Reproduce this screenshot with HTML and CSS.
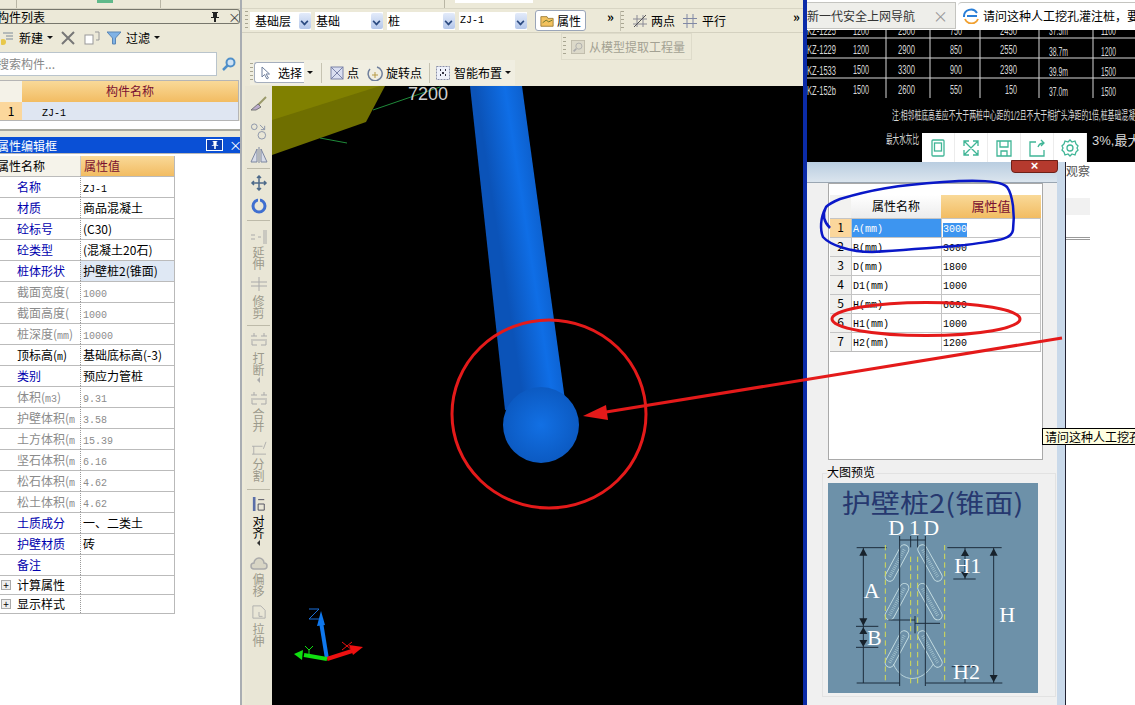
FILE: index.html
```html
<!DOCTYPE html>
<html lang="zh">
<head>
<meta charset="utf-8">
<title>构件列表</title>
<link rel="stylesheet" href="styles.css">
</head>
<body>
<div class="app">
  <aside class="left">
    <div class="strip"><i class="st-sep st-a"></i><i class="st-green"></i><i class="st-sep st-b"></i></div>
    <div class="dock-title"><span class="cut">构件列表</span><span class="dock-btns"><svg class="pin-ic" viewBox="0 0 8 10"><path d="M1 0h6v1H6v4h2v1H5v4H3V6H0V5h2V1H1z" fill="#222"/></svg><span class="close-x">×</span></span></div>
    <div class="left-tools">
      <svg class="ic14" viewBox="0 0 14 14"><path d="M2 2h10M5 5h7M5 8h7" stroke="#7d8a99" fill="none"/><circle cx="2" cy="11" r="3" fill="#e8c84a"/></svg>
      <span class="lt-text">新建</span><span class="caret"></span>
      <svg class="ic14 gap-a" viewBox="0 0 14 14"><path d="M1 1l12 12M13 1L1 13" stroke="#777" stroke-width="2"/></svg>
      <svg class="ic16 gap-c" viewBox="0 0 16 14"><rect x="1" y="4" width="8" height="9" fill="#fff" stroke="#999"/><path d="M11 1h4v8h-3" fill="none" stroke="#999"/></svg>
      <svg class="ic14 gap-d" viewBox="0 0 14 14"><path d="M0 1h14L8.500 7v6h-3V7z" fill="#7fb2e5" stroke="#5a86b5"/></svg>
      <span class="lt-text gap-b">过滤</span><span class="caret"></span>
    </div>
    <div class="search-row">
      <div class="search"><span class="cut">搜索构件...</span></div>
      <svg class="ic14 search-ic" viewBox="0 0 14 14"><circle cx="8.500" cy="5.500" r="4" fill="#cfe3f5" stroke="#4f8fc9" stroke-width="2"/><path d="M5.500 8.500L1 13" stroke="#4f8fc9" stroke-width="2.500"/></svg>
    </div>
    <div class="list">
      <div class="list-head"><div class="list-corner"></div><div class="list-name">构件名称</div></div>
      <div class="list-row"><div class="list-num">1</div><div class="list-val"><span class="latin">ZJ-1</span></div></div>
    </div>
    <div class="list-foot"></div>
    <div class="prop-title"><span class="cut">属性编辑框</span><span class="prop-btns"><span class="pin"><svg class="pin-ic" viewBox="0 0 8 10"><path d="M1 0h6v1H6v4h2v1H5v4H3V6H0V5h2V1H1z" fill="#fff"/></svg></span><span class="close-x">×</span></span></div>
    <div class="prop-body">
      <div class="prop-table">
        <div class="ph ph-name"><span class="cut">属性名称</span></div><div class="ph ph-val">属性值</div>
        <div class="pn blue">名称</div><div class="pv"><span class="latin">ZJ-1</span></div>
        <div class="pn blue">材质</div><div class="pv">商品混凝土</div>
        <div class="pn blue">砼标号</div><div class="pv">(C30)</div>
        <div class="pn blue">砼类型</div><div class="pv">(混凝土20石)</div>
        <div class="pn blue">桩体形状</div><div class="pv sel">护壁桩2(锥面)</div>
        <div class="pn gray">截面宽度(</div><div class="pv gray"><span class="latin">1000</span></div>
        <div class="pn gray">截面高度(</div><div class="pv gray"><span class="latin">1000</span></div>
        <div class="pn gray">桩深度(<span class="latin">mm</span>)</div><div class="pv gray"><span class="latin">10000</span></div>
        <div class="pn">顶标高(<span class="latin">m</span>)</div><div class="pv">基础底标高(-3)</div>
        <div class="pn blue">类别</div><div class="pv">预应力管桩</div>
        <div class="pn gray">体积(<span class="latin">m3</span>)</div><div class="pv gray"><span class="latin">9.31</span></div>
        <div class="pn gray">护壁体积(<span class="latin">m</span></div><div class="pv gray"><span class="latin">3.58</span></div>
        <div class="pn gray">土方体积(<span class="latin">m</span></div><div class="pv gray"><span class="latin">15.39</span></div>
        <div class="pn gray">坚石体积(<span class="latin">m</span></div><div class="pv gray"><span class="latin">6.16</span></div>
        <div class="pn gray">松石体积(<span class="latin">m</span></div><div class="pv gray"><span class="latin">4.62</span></div>
        <div class="pn gray">松土体积(<span class="latin">m</span></div><div class="pv gray"><span class="latin">4.62</span></div>
        <div class="pn blue">土质成分</div><div class="pv">一、二类土</div>
        <div class="pn blue">护壁材质</div><div class="pv">砖</div>
        <div class="pn blue">备注</div><div class="pv"></div>
        <div class="pn short"><span class="plus">+</span>计算属性</div><div class="pv short"></div>
        <div class="pn short"><span class="plus">+</span>显示样式</div><div class="pv short"></div>
      </div>
    </div>
  </aside>

  <main class="mid">
    <div class="strip"><i class="st-sep st-c"></i><i class="st-white"></i></div>
    <div class="bar1">
      <div class="grip"></div>
      <div class="combo c1"><span>基础层</span><i class="drop"></i></div>
      <div class="combo c2"><span>基础</span><i class="drop"></i></div>
      <div class="combo c2"><span>桩</span><i class="drop"></i></div>
      <div class="combo c2"><span class="latin">ZJ-1</span><i class="drop"></i></div>
      <div class="attr-btn">
        <svg class="ic14" viewBox="0 0 16 14"><path d="M1 2h7l1 2h6v9H1z" fill="#f3c25e" stroke="#9a7a35"/><path d="M3 9l4-3 3 2 4-2" stroke="#60702a" fill="none"/></svg>
        <span>属性</span>
      </div>
      <span class="more m1">»</span>
      <div class="vsep"></div><div class="grip"></div>
      <svg class="ic14 two" viewBox="0 0 14 14"><path d="M4 1v12M10 1v12M0 5h14M0 10h14" stroke="#8a8a96"/><path d="M1 13L13 1" stroke="#555"/></svg>
      <span class="t12 two-t">两点</span>
      <svg class="ic14 par" viewBox="0 0 14 14"><path d="M4 0v14M10 0v14M0 4.500h14M0 9.500h14" stroke="#8088a5"/></svg>
      <span class="t12 par-t">平行</span>
      <span class="more m2">»</span>
    </div>
    <div class="bar2">
      <div class="extract"><div class="grip"></div>
        <svg class="ic14 ex-ic" viewBox="0 0 16 16"><rect x=".5" y=".5" width="15" height="15" fill="#dcd9c9" stroke="#bdbaa9"/><circle cx="9" cy="7" r="3.500" fill="none" stroke="#aaa"/><path d="M6 10l-3 3" stroke="#aaa" stroke-width="2"/></svg>
        <span>从模型提取工程量</span></div>
    </div>
    <div class="bar3">
      <div class="tools3">
        <div class="grip"></div>
        <div class="sel-btn"><svg class="ic14" viewBox="0 0 14 14"><path d="M4 1v10l2.500-2.500L9 13l1.500-1L8 8h3.500z" fill="#fff" stroke="#6f7f9c"/></svg><span>选择</span></div>
        <span class="caret c-sel"></span>
        <div class="vsep s3a"></div>
        <svg class="ic14 dot-ic" viewBox="0 0 14 14"><rect x="1" y="1" width="12" height="12" fill="#d9def0" stroke="#7a82a8"/><path d="M1 1l12 12M13 1L1 13" stroke="#7a82a8"/></svg>
        <span class="t12 dot-t">点</span>
        <svg class="ic16 rot-ic" viewBox="0 0 16 16"><path d="M3 4a7 7 0 1 0 7-2" fill="none" stroke="#6f7f9c" stroke-width="1.500"/><path d="M8 7v6M5 10h6" stroke="#b79a45"/></svg>
        <span class="t12 rot-t">旋转点</span>
        <div class="vsep s3b"></div>
        <svg class="ic14 smart-ic" viewBox="0 0 14 14"><rect x=".5" y=".5" width="13" height="13" fill="#eef1fa" stroke="#8a90aa" stroke-dasharray="2 1"/><path d="M4 4h1M9 4h1M4 9h1M9 9h1M7 6v2" stroke="#334" stroke-width="2"/></svg>
        <span class="t12 smart-t">智能布置</span><span class="caret c-smart"></span>
      </div>
    </div>
    <div class="work">
      <div class="vtools">
        <svg class="vi g0" viewBox="0 0 18 16"><path d="M16 1L8 9" stroke="#9a9a6a" stroke-width="2"/><path d="M8 8l3 3-5 3H1z" fill="#b9a9c9" stroke="#777"/></svg>
        <svg class="vi g1" viewBox="0 0 18 18"><circle cx="4" cy="4" r="3" fill="none" stroke="#8a94a8"/><circle cx="12" cy="13" r="4" fill="none" stroke="#8a94a8"/><path d="M10 2l5 5M15 3v4h-4" stroke="#8a94a8" fill="none"/></svg>
        <svg class="vi g2" viewBox="0 0 18 18"><path d="M9 1v16M7 3L1 16h6zM11 3l6 13h-6z" fill="#d8dce8" stroke="#7d87a0"/></svg>
        <div class="vs v-a"></div>
        <svg class="vi g3" viewBox="0 0 16 16"><path d="M8 1v14M1 8h14M6 3l2-2 2 2M6 13l2 2 2-2M3 6L1 8l2 2M13 6l2 2-2 2" stroke="#4d6a8a" fill="none" stroke-width="1.500"/></svg>
        <svg class="vi g4" viewBox="0 0 16 16"><circle cx="8" cy="8" r="6" fill="none" stroke="#3f6fd0" stroke-width="3"/><path d="M8 0v6" stroke="#e9e6d6" stroke-width="2"/></svg>
        <div class="vs v-b"></div>
        <svg class="vi g5" viewBox="0 0 18 14"><path d="M1 5h4M1 9h4M8 7h3M14 0v14M16 0v14" stroke="#aaa"/></svg>
        <div class="vt dim t5">延伸</div>
        <svg class="vi g6" viewBox="0 0 18 14"><path d="M9 0v14M1 5h16M1 9h16" stroke="#aaa"/></svg>
        <div class="vt dim t6">修剪</div>
        <div class="vs v-c"></div>
        <svg class="vi g7" viewBox="0 0 18 14"><path d="M1 3h6M11 3h6M4 0v3M14 0v3M1 7h16M2 12h5M11 12h5M2 8v4M16 8v4" stroke="#aaa" fill="none"/></svg>
        <div class="vt dim t7">打断</div><div class="va dim"></div>
        <svg class="vi g8" viewBox="0 0 18 14"><path d="M1 3h6M11 3h6M4 0v3M14 0v3M1 7h16M2 12h5M11 12h5M2 8v4M16 8v4" stroke="#aaa" fill="none"/></svg>
        <div class="vt dim t8">合并</div>
        <svg class="vi g9" viewBox="0 0 18 16"><path d="M1 6h12M1 15h16M3 6v9M14 9l3-8" stroke="#aaa" fill="none"/></svg>
        <div class="vt dim t9">分割</div>
        <div class="vs v-d"></div>
        <svg class="vi g10" viewBox="0 0 14 16"><rect x="0" y="0" width="3" height="16" fill="#5a6ea8"/><path d="M6 3h7M6 8h7v7H6z" stroke="#445" fill="none"/></svg>
        <div class="vt t10">对齐</div><div class="va"></div>
        <svg class="vi g11" viewBox="0 0 18 14"><path d="M4 12a3 3 0 0 1 0-6 5 5 0 0 1 10 0 3 3 0 0 1 0 6z" fill="#d8d5c5" stroke="#aaa" stroke-width="1.500"/></svg>
        <div class="vt dim t11">偏移</div>
        <svg class="vi g12" viewBox="0 0 16 16"><path d="M1 1h9l5 5v9H1z M8 8v5h4" fill="none" stroke="#aaa"/></svg>
        <div class="vt dim t12v">拉伸</div>
        <div class="chev">⌄</div>
      </div>
      <div class="scene">
        <svg class="scene-svg" viewBox="272 86 531 619">
          <defs>
            <linearGradient id="shaft" gradientUnits="userSpaceOnUse" x1="500" y1="250" x2="565" y2="240">
              <stop offset="0" stop-color="#0b53b8"/><stop offset=".45" stop-color="#0f6ee6"/><stop offset="1" stop-color="#0a50b2"/>
            </linearGradient>
            <radialGradient id="ball" cx=".5" cy=".5" r=".55">
              <stop offset="0" stop-color="#1270e4"/><stop offset="1" stop-color="#0b58bf"/>
            </radialGradient>
          </defs>
          <polygon points="272,155 366,122 385,86 272,86" fill="#6f6f00"/>
          <polygon points="272,120 380,86 272,86" fill="#808000"/>
          <path d="M373 110L440 87M320 138L347 143" stroke="#1f8a3a"/>
          <text class="dim-label" x="408" y="100">7200</text>
          <polygon points="470,86 522,86 565,400 505,410" fill="url(#shaft)"/>
          <circle cx="541" cy="425" r="38" fill="url(#ball)"/>
          <path d="M327 659L321 622" stroke="#0f78ee" stroke-width="4"/>
          <path d="M321 611L317 626L325 625Z" fill="#0f78ee"/>
          <path d="M309 609h10l-10 10h10" class="ax-z"/>
          <path d="M327 659L352 651" stroke="#ee1010" stroke-width="4"/>
          <path d="M363 647L349 645L353 655Z" fill="#ee1010"/>
          <path d="M342 642l10 8M352 642l-10 8" stroke="#ee1010"/>
          <path d="M327 659L304 655" stroke="#10e010" stroke-width="4"/>
          <path d="M294 654L303 650L302 660Z" fill="#10e010"/>
          <path d="M305 646l4 4 4-4M309 650v5" stroke="#10e010" fill="none"/>
        </svg>
      </div>
    </div>
  </main>

  <section class="right">
    <div class="tabs">
      <div class="tab"><span>新一代安全上网导航</span><span class="tab-x">×</span></div>
      <div class="tab on">
        <svg class="ic16" viewBox="0 0 16 16"><path d="M1 9a7 7 0 0 1 13-4" stroke="#2a7fd8" stroke-width="2" fill="none"/><path d="M4 8h10" stroke="#2a7fd8" stroke-width="2"/><path d="M2 11a7 7 0 0 0 13 0" stroke="#f0a030" stroke-width="2" fill="none"/></svg>
        <span>请问这种人工挖孔灌注桩，要</span>
      </div>
    </div>
    <div class="cad">
      <svg class="cad-svg" viewBox="803 30 332 132">
        <path d="M807 38H1135M807 58H1135M807 78H1135M886 30V98M930 30V98M980 30V98M1039 30V98M1093 30V98" stroke="#d8d8d8"/>
        <g class="cad-t">
          <text x="807" y="35" textLength="29" lengthAdjust="spacingAndGlyphs">KZ-1225</text><text x="853" y="35" textLength="16" lengthAdjust="spacingAndGlyphs">1200</text><text x="898" y="35" textLength="17" lengthAdjust="spacingAndGlyphs">2500</text><text x="950" y="35" textLength="12" lengthAdjust="spacingAndGlyphs">750</text><text x="1000" y="35" textLength="17" lengthAdjust="spacingAndGlyphs">2450</text><text x="1049" y="35" textLength="19" lengthAdjust="spacingAndGlyphs">37.5m</text><text x="1101" y="35" textLength="15" lengthAdjust="spacingAndGlyphs">1100</text>
          <text x="807" y="54" textLength="29" lengthAdjust="spacingAndGlyphs">KZ-1229</text><text x="853" y="54" textLength="16" lengthAdjust="spacingAndGlyphs">1200</text><text x="898" y="54" textLength="17" lengthAdjust="spacingAndGlyphs">2900</text><text x="950" y="54" textLength="12" lengthAdjust="spacingAndGlyphs">850</text><text x="1000" y="54" textLength="17" lengthAdjust="spacingAndGlyphs">2550</text><text x="1049" y="56" textLength="19" lengthAdjust="spacingAndGlyphs">38.7m</text><text x="1101" y="56" textLength="15" lengthAdjust="spacingAndGlyphs">1200</text>
          <text x="807" y="75" textLength="29" lengthAdjust="spacingAndGlyphs">KZ-1533</text><text x="853" y="74" textLength="16" lengthAdjust="spacingAndGlyphs">1500</text><text x="898" y="74" textLength="17" lengthAdjust="spacingAndGlyphs">3300</text><text x="950" y="74" textLength="12" lengthAdjust="spacingAndGlyphs">900</text><text x="1000" y="74" textLength="17" lengthAdjust="spacingAndGlyphs">2390</text><text x="1049" y="76" textLength="19" lengthAdjust="spacingAndGlyphs">39.9m</text><text x="1101" y="76" textLength="15" lengthAdjust="spacingAndGlyphs">1500</text>
          <text x="807" y="95" textLength="29" lengthAdjust="spacingAndGlyphs">KZ-152b</text><text x="853" y="94" textLength="16" lengthAdjust="spacingAndGlyphs">1500</text><text x="898" y="94" textLength="17" lengthAdjust="spacingAndGlyphs">2600</text><text x="950" y="94" textLength="12" lengthAdjust="spacingAndGlyphs">550</text><text x="1005" y="94" textLength="12" lengthAdjust="spacingAndGlyphs">150</text><text x="1049" y="96" textLength="19" lengthAdjust="spacingAndGlyphs">37.0m</text><text x="1101" y="96" textLength="15" lengthAdjust="spacingAndGlyphs">1500</text>
          <text x="892" y="120" textLength="243" lengthAdjust="spacingAndGlyphs">注:相邻桩底高差应不大于两桩中心距的1/2且不大于相扩头净距的1倍,桩基础混凝</text>
          <text x="886" y="144" textLength="33" lengthAdjust="spacingAndGlyphs">最大水灰比</text>
          <text x="1092" y="145" class="cad-big">3%,最大碱</text>
        </g>
      </svg>
      <div class="float-bar">
        <div class="fb"><svg class="ic18" viewBox="0 0 18 18"><rect x="3" y="1" width="12" height="16" rx="1"/><rect x="5.500" y="4" width="7" height="8"/></svg></div>
        <div class="fb"><svg class="ic18" viewBox="0 0 18 18"><path d="M2 7V2h5M16 7V2h-5M2 11v5h5M16 11v5h-5M2 2l14 14M16 2L2 16"/></svg></div>
        <div class="fb"><svg class="ic18" viewBox="0 0 18 18"><path d="M2 2h14v15H2zM5 2v6h8V2M6 17v-5h6v5"/></svg></div>
        <div class="fb"><svg class="ic18" viewBox="0 0 18 18"><path d="M8 3H2v14h14v-6M10 8c1-3 3-4 6-4M13 1l3 3-3 3"/></svg></div>
        <div class="fb"><svg class="ic18" viewBox="0 0 18 18"><circle cx="9" cy="9" r="3"/><path d="M9 1l2 2 3-1 1 3 2 2-1 2 1 2-2 2-1 3-3-1-2 2-2-2-3 1-1-3-2-2 1-2-1-2 2-2 1-3 3 1z"/></svg></div>
      </div>
    </div>
    <div class="lower">
      <div class="dialog">
        <div class="dlg-title"><div class="dlg-close">×</div></div>
        <div class="dlg-inner">
          <div class="dt">
            <div class="dh-c"></div><div class="dh-n">属性名称</div><div class="dh-v">属性值</div>
            <div class="dnum on">1</div><div class="dname hi"><span class="latin">A(mm)</span></div><div class="dval"><span class="latin mark">3000</span></div>
            <div class="dnum">2</div><div class="dname"><span class="latin">B(mm)</span></div><div class="dval"><span class="latin">3000</span></div>
            <div class="dnum">3</div><div class="dname"><span class="latin">D(mm)</span></div><div class="dval"><span class="latin">1800</span></div>
            <div class="dnum">4</div><div class="dname"><span class="latin">D1(mm)</span></div><div class="dval"><span class="latin">1000</span></div>
            <div class="dnum">5</div><div class="dname"><span class="latin">H(mm)</span></div><div class="dval"><span class="latin">6000</span></div>
            <div class="dnum">6</div><div class="dname"><span class="latin">H1(mm)</span></div><div class="dval"><span class="latin">1000</span></div>
            <div class="dnum">7</div><div class="dname"><span class="latin">H2(mm)</span></div><div class="dval"><span class="latin">1200</span></div>
          </div>
        </div>
        <div class="preview">
          <div class="legend">大图预览</div>
          <svg class="diagram" viewBox="69 69 630 630">
            <rect x="69" y="69" width="630" height="630" fill="#6d91a9"/>
            <text class="d-title" x="110" y="158" textLength="545" lengthAdjust="spacingAndGlyphs">护壁桩2(锥面)</text>
            <g class="d-cap-o">
              <path d="M254 350L298 268M398 350L352 268M254 466L298 384M398 466L352 384M254 608L298 526M398 608L352 526"/>
            </g>
            <g class="d-cap-i">
              <path d="M254 350L298 268M398 350L352 268M254 466L298 384M398 466L352 384M254 608L298 526M398 608L352 526"/>
            </g>
            <g class="d-cap-d">
              <path d="M254 350L298 268M398 350L352 268M254 466L298 384M398 466L352 384M254 608L298 526M398 608L352 526"/>
            </g>
            <path class="d-arc" d="M265 612C290 670 350 670 385 612"/>
            <g class="d-dark">
              <path d="M284 228V678M361 228V678M317 228V262M338 228V262M284 240H361"/>
              <path d="M155 263H245M155 669H284M362 669H592M427 263H590M175 263V669M566 263V669M445 357H512M480 263V357M153 499H220M153 562H220M250 480H330M330 490H405M330 468V520M480 620V669M440 620H510"/>
            </g>
            <g class="d-arrow">
              <path d="M175 265l-12 22h24zM175 497l-12-22h24zM175 502l-12 20h24zM175 560l-12-20h24zM566 265l-12 22h24zM566 667l-12-22h24zM480 268l-12 20h24zM480 355l-12-20h24z"/>
            </g>
            <g class="d-yellow">
              <path d="M241 255V669M419 255V669M317 290V680M338 290V680"/>
            </g>
            <text class="d-w" x="250" y="226">D</text><text class="d-w" x="312" y="226">1</text><text class="d-w" x="355" y="226">D</text>
            <text class="d-w" x="448" y="338">H1</text><text class="d-w" x="176" y="414">A</text>
            <text class="d-w" x="186" y="556">B</text><text class="d-w" x="583" y="486">H</text>
            <text class="d-w" x="444" y="657">H2</text>
          </svg>
        </div>
      </div>
      <div class="page">
        <div class="page-t">观察</div>
        <div class="page-bar"></div>
        <div class="page-line"></div>
      </div>
    </div>
  </section>
</div>

<div class="tooltip">请问这种人工挖孔灌注桩，要</div>

<svg class="marks" viewBox="0 0 1135 705">
  <ellipse class="m-red" cx="549" cy="414" rx="97" ry="94"/>
  <ellipse class="m-red" cx="926" cy="319" rx="94" ry="16.500"/>
  <path class="m-red" d="M1062 338L600 413"/>
  <path class="m-fill" d="M583 416L606 405L608 420Z"/>
  <path class="m-blue" d="M830 228C824 222 822 215 826 207C830 203 835 201 840 199C870 190 897 185 943 182C970 180 1000 180 1007 187C1013 195 1015 215 1013 230C1012 238 1005 240 965 245C930 248 905 250 872 252C850 252 830 245 823 237C820 230 820 218 826 207"/>
</svg>
</body>
</html>
```
FILE: styles.css
```css
* { box-sizing: border-box; }
html, body { margin: 0; padding: 0; }
body {
  width: 1135px; height: 705px; overflow: hidden; position: relative;
  background: #fff; color: #000;
  font: 12px/16px "Noto Sans CJK SC", "Liberation Sans", sans-serif;
}
.app { display: flex; width: 1135px; height: 705px; }
.latin { font-family: "Liberation Mono", monospace; font-size: 10px; }
.cut { margin-left: -3px; }
.strip { height: 9px; background: #ece9d8; border-bottom: 1px solid #d8d5c4; display: flex; flex: none; }
.st-sep { width: 1px; height: 8px; background: #b9b6a5; flex: none; }
.st-a { margin-left: 16px; }
.st-green { width: 16px; height: 3px; margin-left: 80px; background: #5fb98a; flex: none; }
.st-b { margin-left: 47px; }
.st-c { margin-left: 202px; }
.st-white { width: 78px; height: 3px; margin-left: 10px; background: #fff; flex: none; }
.ic14 { width: 14px; height: 14px; flex: none; }
.ic16 { width: 16px; height: 16px; flex: none; }
.ic18 { width: 18px; height: 18px; fill: none; stroke: #3fb596; stroke-width: 1.300; }
.caret { width: 0; height: 0; border: 3px solid transparent; border-top: 3px solid #111; border-bottom: 0; margin-left: 4px; flex: none; }
.t12 { line-height: 16px; flex: none; white-space: nowrap; }
.grip { width: 3px; height: 20px; flex: none; background: repeating-linear-gradient(#a9a692 0 1px, transparent 1px 4px); }
.vsep { width: 1px; height: 20px; background: #c6c3b2; flex: none; }

/* left */
.left { width: 242px; flex: none; background: #ece9d8; border-right: 2px solid #a9adb2; display: flex; flex-direction: column; height: 705px; }
.dock-title { height: 15px; display: flex; justify-content: space-between; align-items: center; border: 1px solid #77776c; border-left: 0; border-radius: 0 3px 3px 0; line-height: 13px; flex: none; }
.dock-btns { display: flex; align-items: center; gap: 9px; color: #444; padding-right: 3px; }
.pin-ic { width: 8px; height: 10px; display: block; flex: none; }
.close-x { font-size: 13px; line-height: 12px; width: 8px; text-align: center; }
.left-tools { height: 27px; display: flex; align-items: center; padding-left: 1px; flex: none; }
.lt-text { margin-left: 4px; }
.gap-a { margin-left: 8px; }
.gap-c { margin-left: 9px; }
.gap-d { margin-left: 7px; }
.gap-b { margin-left: 5px; }
.search-row { height: 26px; display: flex; align-items: center; flex: none; }
.search { width: 217px; height: 24px; background: #fff; border: 1px solid #b9c4cc; border-left: 0; line-height: 21px; color: #888; }
.search-ic { margin-left: 5px; }
.list { margin-top: 3px; height: 41px; border: 1px solid #b5b5b5; border-left: 0; width: 239px; flex: none; }
.list-head { display: flex; height: 21px; }
.list-corner { width: 22px; background: #f4f2e8; }
.list-name { flex: 1; text-align: center; line-height: 20px; color: #7a1030; background: linear-gradient(#f9d998, #f2bc62); }
.list-row { display: flex; height: 18px; }
.list-num { width: 22px; background: #fbd79c; text-align: center; line-height: 18px; }
.list-val { flex: 1; background: #dfe6f2; padding-left: 20px; line-height: 18px; }
.list-foot { height: 10px; background: #fff; border-bottom: 2px solid #a9a9a0; margin-bottom: 6px; flex: none; }
.prop-title { height: 16px; background: #0a50d6; color: #fff; display: flex; justify-content: space-between; align-items: center; line-height: 15px; flex: none; }
.prop-btns { display: flex; align-items: center; padding-right: 3px; gap: 6px; }
.pin { width: 17px; height: 12px; border: 1px solid #fff; background: #0a3db0; display: flex; align-items: center; justify-content: center; }
.pin .pin-ic { height: 8px; }
.prop-body { flex: 1; background: #fff; border-top: 1px solid #b8b8b8; padding-top: 2px; }
.prop-table { display: grid; grid-template-columns: 80px 94px; width: 175px; grid-template-rows: 20px repeat(19, 21px) 19px 19px; border-right: 1px solid #b9b9b9; border-bottom: 1px solid #b9b9b9; }
.ph { line-height: 20px; }
.ph-name { background: #f5f3ea; }
.ph-val { background: linear-gradient(#f9d998, #f2bc62); color: #7a1030; padding-left: 3px; border-left: 1px solid #ccc; }
.pn, .pv { border-top: 1px solid #bbb; line-height: 19px; white-space: nowrap; overflow: hidden; }
.pn { padding-left: 17px; }
.pv { padding-left: 2px; border-left: 1px dotted #999; }
.blue { color: #0000ae; }
.gray { color: #8b8b8b; }
.sel { background: #dfe8f4; }
.short { line-height: 18px; }
.plus { position: absolute; left: 1px; width: 10px; height: 10px; margin-top: 4px; border: 1px solid #aaa; background: #eee; line-height: 7px; font-size: 10px; text-align: center; }

/* middle */
.mid { width: 561px; flex: none; background: #ece9d8; display: flex; flex-direction: column; height: 705px; }
.bar1 { height: 24px; display: flex; align-items: center; padding-left: 3px; border-bottom: 1px solid #d4d1c0; flex: none; }
.combo { display: flex; align-items: center; justify-content: space-between; background: #fff; height: 18px; flex: none; }
.c1 { width: 61px; margin-left: 2px; padding-left: 5px; }
.c2 { width: 68px; margin-left: 4px; padding-left: 1px; }
.drop { width: 12px; height: 16px; background: linear-gradient(#e3ebfa, #b4c7ea); border-radius: 2px; position: relative; flex: none; }
.drop::after { content: ""; position: absolute; left: 2px; top: 5px; width: 5px; height: 5px; border-right: 2px solid #2b4a80; border-bottom: 2px solid #2b4a80; transform: rotate(45deg) scale(.8); }
.attr-btn { width: 51px; height: 21px; margin-left: 8px; border: 1px solid #9aa5b8; border-radius: 3px; background: #fff; display: flex; align-items: center; gap: 3px; padding-left: 4px; flex: none; }
.more { font-size: 13px; font-weight: bold; line-height: 12px; flex: none; }
.m1 { margin-left: 21px; margin-right: 6px; margin-top: -8px; }
.two { margin-left: 9px; }
.two-t { margin-left: 4px; }
.par { margin-left: 8px; }
.par-t { margin-left: 5px; }
.m2 { margin-left: 67px; margin-top: -8px; }
.bar2 { height: 27px; padding-left: 319px; flex: none; }
.extract { width: 131px; height: 27px; display: flex; align-items: center; border: 1px solid #dedbca; color: #a3a193; padding-left: 1px; white-space: nowrap; }
.ex-ic { margin: 0 4px 0 5px; }
.bar3 { height: 26px; flex: none; padding-left: 8px; }
.tools3 { width: 265px; height: 25px; display: flex; align-items: center; background: #f0eee1; }
.sel-btn { margin-left: 1px; width: 50px; height: 21px; background: #fff; border: 1px solid #a5aebd; border-right: 0; border-radius: 3px 0 0 3px; display: flex; align-items: center; gap: 6px; padding-left: 3px; white-space: nowrap; flex: none; }
.c-sel { margin-left: 3px; }
.s3a { margin-left: 8px; }
.dot-ic { margin-left: 8px; }
.dot-t { margin-left: 3px; }
.rot-ic { margin-left: 8px; }
.rot-t { margin-left: 3px; }
.s3b { margin-left: 7px; }
.smart-ic { margin-left: 6px; }
.smart-t { margin-left: 4px; }
.c-smart { margin-left: 3px; }
.work { flex: 1; display: flex; min-height: 0; }
.vtools { width: 30px; display: flex; flex-direction: column; align-items: center; flex: none; background: #e9e6d6; border-left: 3px solid #ece9d8; }
.vi { width: 18px; height: 14px; flex: none; display: block; }
.g0 { margin-top: 10px; height: 16px; }
.g1 { margin-top: 11px; height: 17px; }
.g2 { margin-top: 6px; height: 18px; }
.v-a { margin-top: 4px; }
.g3 { margin-top: 6px; height: 16px; }
.g4 { margin-top: 7px; height: 16px; }
.v-b { margin-top: 6px; }
.g5 { margin-top: 9px; }
.t5 { margin-top: 2px; }
.g6 { margin-top: 7px; }
.t6 { margin-top: 4px; }
.v-c { margin-top: 6px; }
.g7 { margin-top: 7px; }
.t7 { margin-top: 5px; }
.g8 { margin-top: 9px; }
.t8 { margin-top: 2px; }
.g9 { margin-top: 9px; }
.t9 { margin-top: 3px; }
.v-d { margin-top: 7px; }
.g10 { margin-top: 7px; }
.t10 { margin-top: 4px; }
.g11 { margin-top: 11px; }
.t11 { margin-top: 2px; }
.g12 { margin-top: 8px; }
.t12v { margin-top: 4px; }
.vs { width: 23px; height: 1px; background: #bdbaa9; flex: none; }
.vt { width: 12px; line-height: 12px; flex: none; }
.dim { color: #9c9a8c; }
.va { width: 0; height: 0; border: 3px solid transparent; border-right: 3px solid #333; border-left: 0; margin-top: 1px; flex: none; }
.va.dim { border-right-color: #aaa; }
.chev { margin-top: 54px; line-height: 10px; font-size: 12px; }
.scene { flex: 1; background: #000; min-width: 0; }
.scene-svg { display: block; width: 100%; height: 100%; }
.dim-label { font: 18px "Liberation Sans", sans-serif; fill: #cfcfcf; }
.ax-z { fill: none; stroke: #1a6fd8; }

/* right */
.right { width: 332px; flex: none; display: flex; flex-direction: column; height: 705px; border-left: 4px solid #0b2ba8; position: relative; }
.tabs { height: 30px; display: flex; background: #fff; flex: none; padding-top: 2px; }
.tab { width: 149px; height: 27px; background: #eeeeea; border: 1px solid #c4c4c0; border-left: 0; display: flex; align-items: center; justify-content: space-between; padding: 0 7px 0 0; color: #333; flex: none; white-space: nowrap; }
.tab-x { color: #999; font-size: 15px; }
.tab.on { width: 180px; background: #fff; margin-left: 2px; border-bottom: 0; border-right: 0; border-radius: 4px 0 0 0; justify-content: flex-start; gap: 4px; padding-left: 5px; color: #000; overflow: hidden; }
.cad { height: 132px; background: #000; position: relative; flex: none; }
.cad-svg { display: block; position: absolute; left: -4px; top: 0; width: 332px; height: 132px; }
.cad-t text { font: 12px "Liberation Sans", "Noto Sans CJK SC", sans-serif; fill: #d8d8d8; }
.cad-t .cad-big { font-size: 13px; }
.float-bar { position: absolute; left: 115px; top: 103px; width: 165px; height: 29px; background: #fff; display: flex; }
.fb { flex: 1; display: flex; align-items: center; justify-content: center; border-right: 1px solid #ececec; }
.lower { flex: 1; display: flex; min-height: 0; }
.dialog { width: 258px; flex: none; background: #f0f0f0; border-right: 8px solid #c9d9ea; box-shadow: 1px 0 0 #223; position: relative; display: flex; flex-direction: column; }
.dlg-title { height: 21px; background: linear-gradient(#b9cde0, #dbe5ee); border-bottom: 1px solid #9aa6b2; flex: none; }
.dlg-close { position: absolute; left: 204px; top: -2px; width: 47px; height: 13px; background: #b53a2e; border: 1px solid #6d2018; border-radius: 0 0 4px 4px; color: #fff; text-align: center; font: bold 13px/10px "Liberation Sans", sans-serif; }
.dlg-inner { margin-left: 21px; width: 215px; height: 277px; background: #fff; border: 1px solid #a9a9a9; padding: 11px 0 0 1px; flex: none; }
.dt { display: grid; grid-template-columns: 21px 90px 100px; grid-template-rows: 23px repeat(7, 19px); border-bottom: 1px solid #bbb; width: 211px; }
.dh-c { background: #f2f2f0; }
.dh-n { background: linear-gradient(#fff, #ececec); text-align: center; line-height: 22px; }
.dh-v { background: linear-gradient(#f9d998, #f2bc62); color: #7a1030; text-align: center; line-height: 22px; font-size: 13px; }
.dnum, .dname, .dval { border-top: 1px solid #c4c4c4; line-height: 16px; }
.dnum { background: #f0f0ee; text-align: center; }
.dnum.on { background: #fbd79c; }
.dname { padding-left: 1px; border-left: 1px solid #c4c4c4; }
.dname.hi { background: #3d95f0; color: #fff; }
.dval { padding-left: 1px; border-left: 1px solid #c4c4c4; border-right: 1px solid #c4c4c4; }
.mark { background: #3d95f0; color: #fff; display: inline-block; line-height: 14px; }
.preview { margin: 13px 0 0 15px; width: 234px; height: 224px; border: 1px solid #e2e2e2; padding: 9px 0 0 5px; position: relative; flex: none; }
.legend { position: absolute; left: 4px; top: -10px; line-height: 16px; background: #f0f0f0; }
.diagram { display: block; width: 210px; height: 210px; }
.d-title { font: 78px "Noto Sans CJK SC", sans-serif; fill: #26386f; }
.d-dark path { stroke: #1d2d3c; stroke-width: 3; fill: none; }
.d-arrow path { fill: #17222c; }
.d-yellow path { stroke: #d5dc55; stroke-width: 3; stroke-dasharray: 16 10; fill: none; }
.d-cap-o path { stroke: #c8e0e4; stroke-width: 30; stroke-linecap: round; fill: none; }
.d-cap-i path { stroke: #6d91a9; stroke-width: 25; stroke-linecap: round; fill: none; }
.d-cap-d path { stroke: #a9c8d2; stroke-width: 10; stroke-dasharray: 2 4; fill: none; }
.d-arc { stroke: #c8e0e4; stroke-width: 2.500; fill: none; }
.d-w { font: 66px "Liberation Serif", serif; fill: #fff; }
.page { flex: 1; background: #fff; display: flex; flex-direction: column; padding-left: 1px; }
.page-t { line-height: 16px; color: #555; margin-top: 1px; }
.page-bar { margin-top: 19px; height: 17px; width: 24px; background: #f1f1f1; }
.page-line { margin-top: 22px; height: 3px; width: 24px; border-top: 1px solid #999; border-bottom: 1px solid #999; }

/* overlays */
.tooltip { position: absolute; left: 1042px; top: 428px; width: 100px; height: 17px; background: #ffffe1; border: 1px solid #000; line-height: 15px; white-space: nowrap; overflow: hidden; padding-left: 2px; }
.marks { position: absolute; left: 0; top: 0; width: 1135px; height: 705px; pointer-events: none; }
.m-red { fill: none; stroke: #e41a1a; stroke-width: 3; }
.m-fill { fill: #e41a1a; }
.m-blue { fill: none; stroke: #0a18c8; stroke-width: 2.500; }
```
